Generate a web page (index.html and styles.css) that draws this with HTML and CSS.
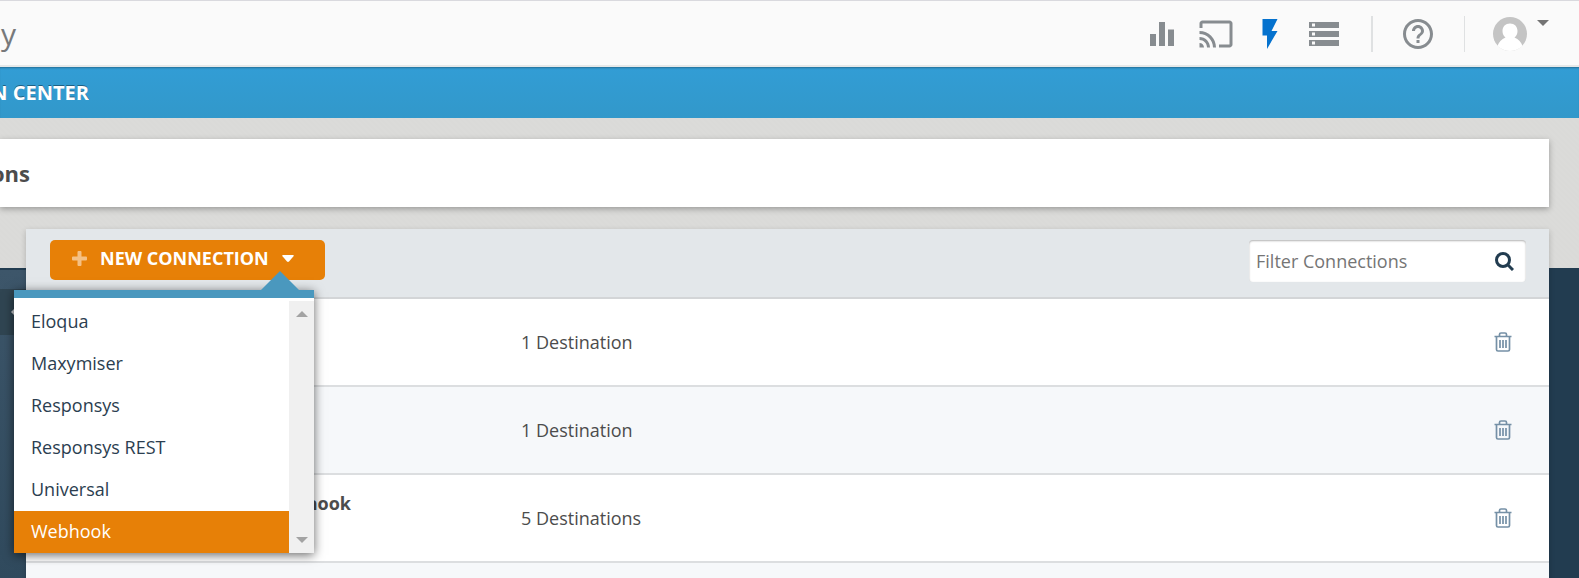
FILE: index.html
```html
<!DOCTYPE html>
<html lang="en">
<head>
    <meta charset="UTF-8">
    <meta name="viewport" content="width=device-width, initial-scale=1.0">
    <title>Connections</title>
    <link rel="stylesheet" href="styles.css">
</head>
<body>

<svg class="sprite" width="0" height="0" aria-hidden="true">
    <symbol id="trash" viewBox="0 0 18 20">
        <path d="M0.5 4.5h17M5.5 4V2.5q0-1.5 1.500-1.500h4q1.500 0 1.500 1.500V4M2.500 5v12.500q0 1.500 1.500 1.500h10q1.500 0 1.500-1.500V5M6 8v8M9 8v8M12 8v8" fill="none" stroke="currentColor" stroke-width="1.700"/>
    </symbol>
</svg>

<header class="topbar">
    <div class="brand">y</div>
    <nav class="tools">
        <button class="icon-btn" aria-label="Reports"><svg viewBox="0 0 24 24"><path d="M10 20h4V4h-4v16zm-6 0h4v-8H4v8zM16 9v11h4V9h-4z"/></svg></button>
        <button class="icon-btn" aria-label="Cast"><svg viewBox="0 0 24 24"><path d="M21 3H3c-1.1 0-2 .9-2 2v3h2V5h18v14h-7v2h7c1.1 0 2-.9 2-2V5c0-1.1-.9-2-2-2zM1 18v3h3c0-1.660-1.340-3-3-3zm0-4v2c2.760 0 5 2.240 5 5h2c0-3.870-3.130-7-7-7zm0-4v2c4.970 0 9 4.030 9 9h2c0-6.080-4.930-11-11-11z"/></svg></button>
        <button class="icon-btn active" aria-label="Actions"><svg viewBox="0 0 24 24"><path d="M7 2v11h3v9l7-12h-4l4-8z"/></svg></button>
        <button class="icon-btn" aria-label="Storage"><svg viewBox="0 0 24 24"><path d="M2 20h20v-4H2v4zm2-3h2v2H4v-2zM2 4v4h20V4H2zm4 3H4V5h2v2zm-4 7h20v-4H2v4zm2-3h2v2H4v-2z"/></svg></button>
    </nav>
    <div class="help">
        <button class="icon-btn" aria-label="Help"><svg viewBox="0 0 24 24"><path d="M11 18h2v-2h-2v2zm1-16C6.480 2 2 6.480 2 12s4.480 10 10 10 10-4.480 10-10S17.520 2 12 2zm0 18c-4.410 0-8-3.590-8-8s3.590-8 8-8 8 3.590 8 8-3.590 8-8 8zm0-14c-2.210 0-4 1.790-4 4h2c0-1.100.9-2 2-2s2 .9 2 2c0 2-3 1.750-3 5h2c0-2.250 3-2.500 3-5 0-2.210-1.790-4-4-4z"/></svg></button>
    </div>
    <button class="account" aria-label="Account">
        <svg class="avatar" viewBox="0 0 34 34">
            <circle cx="17" cy="17" r="17" fill="#c4c4c4"/>
            <path d="M17 6.500c-4.500 0-7.500 3-7.500 7.500 0 3 1 5 3 6.500-4 1.500-7 5-8 8.500Q10 34 17 34t12.500-5c-1-3.500-4-7-8-8.500 2-1.500 3-3.500 3-6.500 0-4.500-3-7.500-7.500-7.500z" fill="#fff"/>
        </svg>
        <svg class="account-caret" viewBox="0 0 12 6"><path d="M0 0h12L6 6z"/></svg>
    </button>
</header>

<div class="section-bar">
    <div class="section-title">N CENTER</div>
</div>

<main class="page">
    <div class="title-panel">
        <h1 class="page-title">ons</h1>
    </div>

    <div class="workspace">
        <aside class="sidebar">
            <button class="collapse" aria-label="Collapse">
                <svg viewBox="0 0 6 8"><path d="M0 4l4-4 2 2v4L4 8z"/></svg>
            </button>
        </aside>

        <section class="panel">
            <div class="toolbar">
                <div class="new-connection">
                    <button class="new-btn">
                        <svg class="plus" viewBox="0 0 15 15"><path d="M5.500 1q0-1 1-1h2q1 0 1 1v4.500H14q1 0 1 1v2q0 1-1 1H9.500V14q0 1-1 1h-2q-1 0-1-1V9.500H1q-1 0-1-1v-2q0-1 1-1h4.500z"/></svg>
                        <span>NEW CONNECTION</span>
                        <svg class="caret" viewBox="0 0 12 7"><path d="M1 0h10q1.500 0 .5 1.300L7 6.500q-1 .9-2 0L.5 1.300Q-.5 0 1 0z"/></svg>
                    </button>
                    <div class="menu">
                        <ul class="menu-list">
                            <li><a href="#">Eloqua</a></li>
                            <li><a href="#">Maxymiser</a></li>
                            <li><a href="#">Responsys</a></li>
                            <li><a href="#">Responsys REST</a></li>
                            <li><a href="#">Universal</a></li>
                            <li><a href="#" class="selected">Webhook</a></li>
                        </ul>
                        <div class="scrollbar">
                            <svg viewBox="0 0 12 6"><path d="M6 0l6 6H0z"/></svg>
                            <svg viewBox="0 0 12 6"><path d="M0 0h12L6 6z"/></svg>
                        </div>
                    </div>
                </div>
                <div class="filter">
                    <input type="text" placeholder="Filter Connections" aria-label="Filter Connections">
                    <button class="search-btn" aria-label="Search">
                        <svg viewBox="0 0 19 19"><circle cx="8" cy="8" r="6.500"/><path d="M12.500 12.500L18 18"/></svg>
                    </button>
                </div>
            </div>

            <table class="connections">
                <tbody>
                    <tr>
                        <td class="name"></td>
                        <td>1 Destination</td>
                        <td class="actions"><button class="delete" aria-label="Delete"><svg><use href="#trash"/></svg></button></td>
                    </tr>
                    <tr>
                        <td class="name"></td>
                        <td>1 Destination</td>
                        <td class="actions"><button class="delete" aria-label="Delete"><svg><use href="#trash"/></svg></button></td>
                    </tr>
                    <tr>
                        <td class="name"><div class="name-text">hook</div></td>
                        <td>5 Destinations</td>
                        <td class="actions"><button class="delete" aria-label="Delete"><svg><use href="#trash"/></svg></button></td>
                    </tr>
                    <tr>
                        <td class="name"></td>
                        <td></td>
                        <td class="actions"></td>
                    </tr>
                </tbody>
            </table>
        </section>
    </div>
</main>

</body>
</html>
```
FILE: styles.css
```css
* {
    box-sizing: border-box;
}

body {
    margin: 0;
    height: 100vh;
    overflow: hidden;
    font-family: "Open Sans", "Noto Sans", sans-serif;
    font-size: 18px;
    line-height: 24px;
    color: #4c4c4c;
    background: #223c50;
}

button {
    padding: 0;
    border: 0;
    background: none;
    font: inherit;
    cursor: pointer;
}

svg {
    display: block;
}

.sprite {
    position: absolute;
}

/* Top bar */
.topbar {
    display: flex;
    align-items: center;
    height: 67px;
    padding: 2px 30px 0 0;
    background: #fafafa;
    border-top: 1px solid #d9d9de;
    border-bottom: 2px solid #e6e8e8;
}

.brand {
    margin-right: auto;
    padding-left: 1px;
    font-size: 30px;
    line-height: 40px;
    color: #77797b;
}

.tools {
    display: flex;
    gap: 18px;
    margin-right: 29px;
}

.icon-btn svg {
    width: 36px;
    height: 36px;
    fill: #878c90;
}

.icon-btn.active svg {
    fill: #0572ce;
}

.help {
    display: flex;
    padding: 0 28px 0 27px;
    border-left: 2px solid #dfe1e2;
    border-right: 1px solid #dfe1e2;
}

.account {
    display: flex;
    align-items: flex-start;
    gap: 10px;
    margin-left: 28px;
}

.avatar {
    width: 34px;
    height: 34px;
}

.account-caret {
    width: 12px;
    height: 6px;
    margin-top: 3px;
    fill: #747474;
}

/* Blue section bar */
.section-bar {
    display: flex;
    align-items: center;
    height: 51px;
    background: linear-gradient(#329dd5, #3298ca);
    box-shadow: inset 0 2px 2px -1px rgba(0, 0, 0, 0.3);
}

.section-title {
    display: flex;
    justify-content: flex-end;
    width: 89px;
    overflow: hidden;
    font-size: 20px;
    font-weight: 700;
    color: #fff;
    text-shadow: 0 -1px 0 rgba(0, 0, 0, 0.4);
    white-space: nowrap;
}

/* Page */
.page {
    padding: 21px 30px 0 0;
    background: repeating-linear-gradient(45deg, #dbdbd9 0 2px, #dadad8 2px 4px) no-repeat;
    background-size: 100% 150px;
}

.title-panel {
    display: flex;
    align-items: center;
    height: 68px;
    background: #fff;
    box-shadow: 0 2px 6px rgba(0, 0, 0, 0.3);
}

.page-title {
    display: flex;
    justify-content: flex-end;
    width: 30px;
    margin: 0;
    overflow: hidden;
    font-size: 22px;
    line-height: 30px;
    font-weight: 700;
}

.workspace {
    display: flex;
    margin-top: 22px;
}

.sidebar {
    width: 26px;
    margin-top: 39px;
    padding-top: 19px;
    background: linear-gradient(#3d566a, #2d475a);
    border-top: 2px solid #223c50;
}

.collapse {
    display: flex;
    align-items: center;
    width: 100%;
    height: 46px;
    padding-left: 11px;
    background: #304552;
}

.collapse svg {
    width: 6px;
    height: 8px;
    fill: #c9ced1;
}

.panel {
    flex: 1;
    box-shadow: 0 2px 6px rgba(0, 0, 0, 0.2);
}

.toolbar {
    display: flex;
    justify-content: space-between;
    align-items: flex-start;
    height: 70px;
    padding: 11px 23px 0 24px;
    background: #e3e7ea;
    border-bottom: 2px solid #d3d5d7;
}

.new-connection {
    position: relative;
}

.new-btn {
    display: flex;
    align-items: center;
    width: 275px;
    height: 40px;
    padding: 0 22px 4px;
    border-radius: 5px;
    background: #e78007;
    color: #fff;
    font-weight: 700;
}

.plus {
    width: 15px;
    height: 15px;
    margin-right: 13px;
    fill: #f5c083;
}

.caret {
    width: 12px;
    height: 7px;
    margin-left: 13px;
    fill: #fff;
}

/* Dropdown */
.menu {
    position: absolute;
    top: 50px;
    left: -36px;
    z-index: 1;
    display: flex;
    width: 300px;
    padding-top: 3px;
    background: #fff;
    border-top: 8px solid #4a98be;
    box-shadow: 0 2px 10px rgba(0, 0, 0, 0.6);
}

.menu::before {
    content: "";
    position: absolute;
    top: -27px;
    right: 15px;
    border: 19px solid transparent;
    border-top: 0;
    border-bottom-color: #4a98be;
}

.menu-list {
    flex: 1;
    margin: 0;
    padding: 0;
    list-style: none;
}

.menu-list a {
    display: block;
    padding: 8px 17px 10px;
    color: #2b3e50;
    text-decoration: none;
}

.menu-list a:hover,
.menu-list .selected {
    background: #e78007;
    color: #fff;
}

.scrollbar {
    display: flex;
    flex-direction: column;
    justify-content: space-between;
    align-items: center;
    width: 25px;
    padding: 10px 0;
    background: #f0f0f0;
}

.scrollbar svg {
    width: 12px;
    height: 6px;
    fill: #a3a3a3;
}

/* Filter box */
.filter {
    display: flex;
    align-items: center;
    width: 277px;
    height: 42px;
    padding: 0 12px 0 7px;
    background: #fff;
    border-radius: 4px;
    box-shadow: inset 0 1px 2px rgba(0, 0, 0, 0.3);
}

.filter input {
    flex: 1;
    min-width: 0;
    padding: 0;
    border: 0;
    outline: none;
    background: none;
    font: inherit;
}

.filter input::placeholder {
    color: #757575;
}

.search-btn svg {
    width: 19px;
    height: 19px;
    fill: none;
    stroke: #223c50;
    stroke-width: 3;
}

/* Connections table */
.connections {
    width: 100%;
    table-layout: fixed;
    border-collapse: separate;
    border-spacing: 0;
}

.connections tr {
    height: 88px;
    background: #fff;
}

.connections tr:nth-child(even) {
    background: #f6f8fa;
}

.connections td {
    padding: 0;
    border-bottom: 2px solid #dcdee0;
}

.connections .name {
    width: 495px;
    padding-top: 16px;
    vertical-align: top;
    font-weight: 700;
}

.name-text {
    display: flex;
    justify-content: flex-end;
    width: 325px;
}

.connections .actions {
    width: 80px;
    padding-right: 37px;
}

.delete {
    display: block;
    margin-left: auto;
    color: #7590a6;
}

.delete svg {
    width: 18px;
    height: 20px;
}
```
